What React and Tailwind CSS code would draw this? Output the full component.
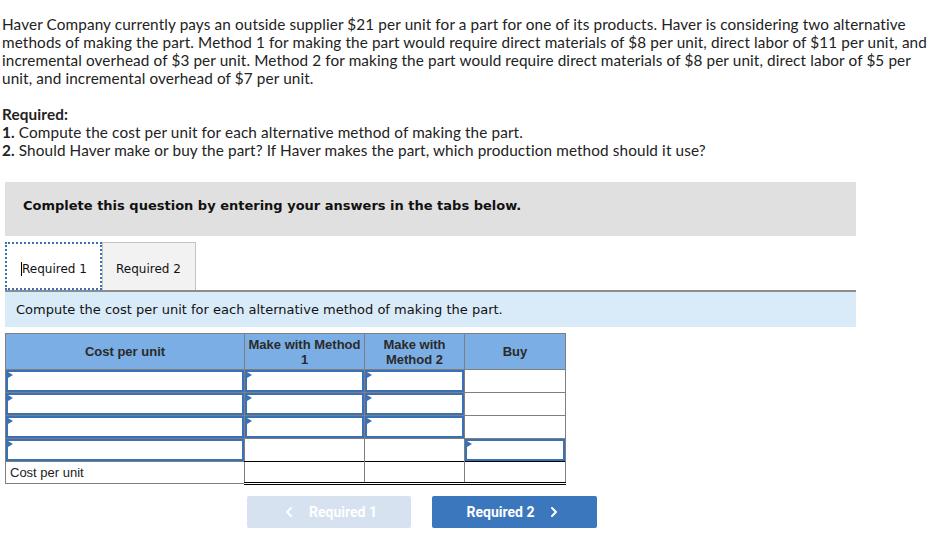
import React from 'react';
import { ChevronLeft, ChevronRight } from 'lucide-react';

const InputCell = () => (
  <td className="p-0 border border-[#7f7f7f] h-[22px]">
    <div className="relative h-[22px] border-2 border-[#3a70b5] bg-white">
      <span className="absolute left-0 top-0 w-0 h-0 border-t-[3px] border-b-[3px] border-l-[5px] border-t-transparent border-b-transparent border-l-[#3a70b5]" />
    </div>
  </td>
);

const PlainCell = ({ children, className = '' }) => (
  <td className={`border border-[#7f7f7f] h-[22px] px-1 ${className}`}>{children}</td>
);

const App = () => {
  return (
    <div className="w-[934px] h-[558px] bg-white relative overflow-hidden">
      {/* Problem text */}
      <div className="pt-[15px] pl-[2px] text-[15.3px] tracking-[0.12px] leading-[18px] text-[#222] whitespace-nowrap" style={{ fontFamily: 'Lato, "Open Sans", sans-serif' }}>
        <p>
          Haver Company currently pays an outside supplier $21 per unit for a part for one of its products. Haver is considering two alternative<br />
          methods of making the part. Method 1 for making the part would require direct materials of $8 per unit, direct labor of $11 per unit, and<br />
          incremental overhead of $3 per unit. Method 2 for making the part would require direct materials of $8 per unit, direct labor of $5 per<br />
          unit, and incremental overhead of $7 per unit.
        </p>
        <p className="mt-[18px] font-bold">Required:</p>
        <p><span className="font-bold">1.</span> Compute the cost per unit for each alternative method of making the part.</p>
        <p><span className="font-bold">2.</span> Should Haver make or buy the part? If Haver makes the part, which production method should it use?</p>
      </div>

      <div className="ml-[5px] w-[851px] mt-[23px]" style={{ fontFamily: '"DejaVu Sans", Verdana, sans-serif' }}>
        {/* Instructions box */}
        <div className="h-[54px] bg-[#e0e0e0] flex items-center pl-[18px] pb-[6px] text-[13px] font-bold text-[#111]">
          Complete this question by entering your answers in the tabs below.
        </div>

        {/* Tabs */}
        <div className="mt-[6px] flex items-end border-b-2 border-[#8c8c8c] h-[50px]">
          <div className="w-[97px] h-[48px] border-2 border-dotted border-[#3a70b5] bg-white flex items-center pl-[14px] pt-[5px] text-[12px] text-[#111]">
            <span className="border-l border-black leading-[14px]">Required 1</span>
          </div>
          <div className="w-[94px] h-[48px] border border-[#c4c4c4] border-b-0 bg-[#f2f2f2] flex items-center pl-[13px] pt-[5px] text-[12px] text-[#111]">
            Required 2
          </div>
        </div>

        <div className="h-[35px] bg-[#d9ebf9] flex items-center pl-[11px] text-[13px] text-[#111]">
          Compute the cost per unit for each alternative method of making the part.
        </div>
      </div>

      {/* Table */}
      <table className="ml-[5px] mt-[6px] table-fixed border-collapse border border-[#7f7f7f] text-[13px] text-[#222]" style={{ fontFamily: '"Liberation Sans", Arial, sans-serif', width: 560 }}>
        <colgroup>
          <col className="w-[239px]" />
          <col className="w-[120px]" />
          <col className="w-[100px]" />
          <col className="w-[101px]" />
        </colgroup>
        <thead>
          <tr className="bg-[#7aaee4] h-[36px] font-bold text-[#2a2a2a]">
            <th className="border border-[#7f7f7f] font-bold leading-[15px]">Cost per unit</th>
            <th className="border border-[#7f7f7f] font-bold leading-[15px]">Make with Method 1</th>
            <th className="border border-[#7f7f7f] font-bold leading-[15px] px-2">Make with Method 2</th>
            <th className="border border-[#7f7f7f] font-bold leading-[15px]">Buy</th>
          </tr>
        </thead>
        <tbody>
          <tr>
            <InputCell />
            <InputCell />
            <InputCell />
            <PlainCell />
          </tr>
          <tr>
            <InputCell />
            <InputCell />
            <InputCell />
            <PlainCell />
          </tr>
          <tr>
            <InputCell />
            <InputCell />
            <InputCell />
            <PlainCell />
          </tr>
          <tr>
            <InputCell />
            <PlainCell className="border-b-black" />
            <PlainCell className="border-b-black" />
            <InputCell />
          </tr>
          <tr>
            <PlainCell className="text-[13px] leading-none">Cost per unit</PlainCell>
            <PlainCell className="border-t-black border-b-[3px] border-b-black border-double" />
            <PlainCell className="border-t-black border-b-[3px] border-b-black border-double" />
            <PlainCell className="border-t-black border-b-[3px] border-b-black border-double" />
          </tr>
        </tbody>
      </table>

      {/* Navigation buttons */}
      <div className="mt-[11px] ml-[247px] flex gap-[21px] text-[14px] font-bold text-white" style={{ fontFamily: 'Roboto, "Liberation Sans", sans-serif' }}>
        <button className="w-[164px] h-[32px] bg-[#d6e2f0] rounded-[2px] flex items-center justify-center gap-[12px]">
          <ChevronLeft size={16} strokeWidth={3} />
          Required 1
        </button>
        <button className="w-[165px] h-[32px] bg-[#3a77bc] rounded-[2px] flex items-center justify-center gap-[12px]">
          Required 2
          <ChevronRight size={16} strokeWidth={3} />
        </button>
      </div>
    </div>
  );
};

export default App;
